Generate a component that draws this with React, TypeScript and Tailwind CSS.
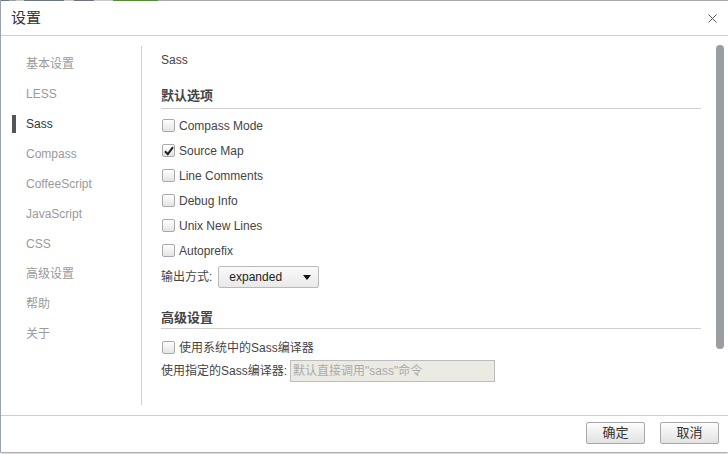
import React from "react";

const FONT = { fontFamily: '"Liberation Sans", "Noto Sans CJK SC", sans-serif' };

const navItems = ["基本设置", "LESS", "Sass", "Compass", "CoffeeScript", "JavaScript", "CSS", "高级设置", "帮助", "关于"];

const options = [
  { label: "Compass Mode", checked: false },
  { label: "Source Map", checked: true },
  { label: "Line Comments", checked: false },
  { label: "Debug Info", checked: false },
  { label: "Unix New Lines", checked: false },
  { label: "Autoprefix", checked: false },
];

function Checkbox({ checked }: { checked?: boolean }) {
  return (
    <span className="relative inline-block h-[13px] w-[13px] shrink-0 rounded-[2px] border border-[#a9a9a9] bg-gradient-to-b from-white to-[#e4e4e4]">
      {checked && (
        <svg className="absolute left-[1px] top-[1px]" width="10" height="10" viewBox="0 0 10 10">
          <path d="M1 5.2 L3.8 8.2 L9 1.2" fill="none" stroke="#222" strokeWidth="2" />
        </svg>
      )}
    </span>
  );
}

function CheckRow({ label, checked }: { label: string; checked?: boolean }) {
  return (
    <div className="flex h-[25px] items-center gap-[4px] pl-[1px]">
      <Checkbox checked={checked} />
      <span className="text-[12px] text-[#444]">{label}</span>
    </div>
  );
}

function Button({ children }: { children: React.ReactNode }) {
  return (
    <button className="h-[22px] w-[59px] rounded-[2px] border border-[#a8a8a8] bg-gradient-to-b from-[#fdfdfd] to-[#e2e2e2] text-[13px] text-[#333]">
      {children}
    </button>
  );
}

export default function App() {
  return (
    <div className="h-[454px] w-[728px] overflow-hidden bg-white" style={FONT}>
      <div className="flex h-[452px] flex-col border-l border-[#9aa3ad] bg-white shadow-[0_1px_2px_rgba(0,0,0,0.45)]">
        {/* strip of the app behind the dialog */}
        <div className="flex h-[1px] shrink-0 bg-[#a9a9a9]">
          <div className="w-[8px] bg-[#6c7580]" />
          <div className="w-[7px] bg-[#a0a0a0]" />
          <div className="w-[8px] bg-[#c8c8c8]" />
          <div className="w-[40px] bg-[#6c7580]" />
          <div className="w-[10px] bg-[#c8c8c8]" />
          <div className="w-[20px] bg-[#6c7580]" />
          <div className="w-[19px] bg-[#c8c8c8]" />
          <div className="w-[45px] bg-[#5b8a37]" />
        </div>

        <div className="flex h-[35px] shrink-0 items-center justify-between border-b border-[#cfcfcf] pl-[10px] pr-[11px]">
          <span className="text-[15px] text-[#333]">设置</span>
          <svg width="9" height="9" viewBox="0 0 9 9">
            <path d="M0.5 0.5 L8.5 8.5 M8.5 0.5 L0.5 8.5" stroke="#555" strokeWidth="1" />
          </svg>
        </div>

        <div className="flex min-h-0 flex-1">
          <div className="my-[10px] w-[141px] shrink-0 border-r border-[#cfcfcf] pt-[3px]">
            {navItems.map((item) => {
              const active = item === "Sass";
              return (
                <div key={item} className="relative flex h-[30px] items-center pl-[25px]">
                  {active && <span className="absolute left-[11px] top-[6px] h-[18px] w-[4px] bg-[#555]" />}
                  <span className={"text-[12px] " + (active ? "text-[#333]" : "text-[#9a9a9a]")}>{item}</span>
                </div>
              );
            })}
          </div>

          <div className="flex min-w-0 flex-1">
            <div className="min-w-0 flex-1 pl-[19px] pr-[15px] pt-[14px]">
              <div className="h-[20px] text-[12px] leading-[20px] text-[#444]">Sass</div>
              <div className="mt-[16px] border-b border-[#cfcfcf] pb-[2px] text-[13px] font-bold leading-[20px] text-[#444]">默认选项</div>
              <div className="mt-[4px]">
                {options.map((o) => (
                  <CheckRow key={o.label} label={o.label} checked={o.checked} />
                ))}
              </div>
              <div className="mt-[3px] flex h-[22px] items-center">
                <span className="text-[12px] text-[#444]">输出方式:</span>
                <div className="ml-[6px] flex h-[22px] w-[101px] items-center justify-between rounded-[2px] border border-[#b9b9b9] bg-gradient-to-b from-[#fafafa] to-[#e9e9e9] pl-[10px] pr-[7px]">
                  <span className="text-[12px] text-[#222]">expanded</span>
                  <svg width="8" height="5" viewBox="0 0 8 5">
                    <path d="M0 0 L8 0 L4 5 Z" fill="#111" />
                  </svg>
                </div>
              </div>
              <div className="mt-[20px] border-b border-[#cfcfcf] text-[13px] font-bold leading-[20px] text-[#444]">高级设置</div>
              <div className="mt-[6px]">
                <CheckRow label="使用系统中的Sass编译器" />
              </div>
              <div className="flex h-[22px] items-center">
                <span className="text-[12px] text-[#444]">使用指定的Sass编译器:</span>
                <div className="ml-[3px] flex h-[22px] w-[205px] items-center border border-[#bdbdbd] bg-[#ebebe4] pl-[2px]">
                  <span className="text-[12px] text-[#aaa]">默认直接调用"sass"命令</span>
                </div>
              </div>
            </div>
            <div className="w-[12px] shrink-0 pr-[4px] pt-[9px]">
              <div className="h-[304px] w-[8px] rounded-full bg-[#9b9ea1]" />
            </div>
          </div>
        </div>

        <div className="flex h-[37px] shrink-0 items-start justify-end gap-[15px] border-t border-[#cfcfcf] pr-[9px] pt-[6px]">
          <Button>确定</Button>
          <Button>取消</Button>
        </div>
      </div>
    </div>
  );
}
